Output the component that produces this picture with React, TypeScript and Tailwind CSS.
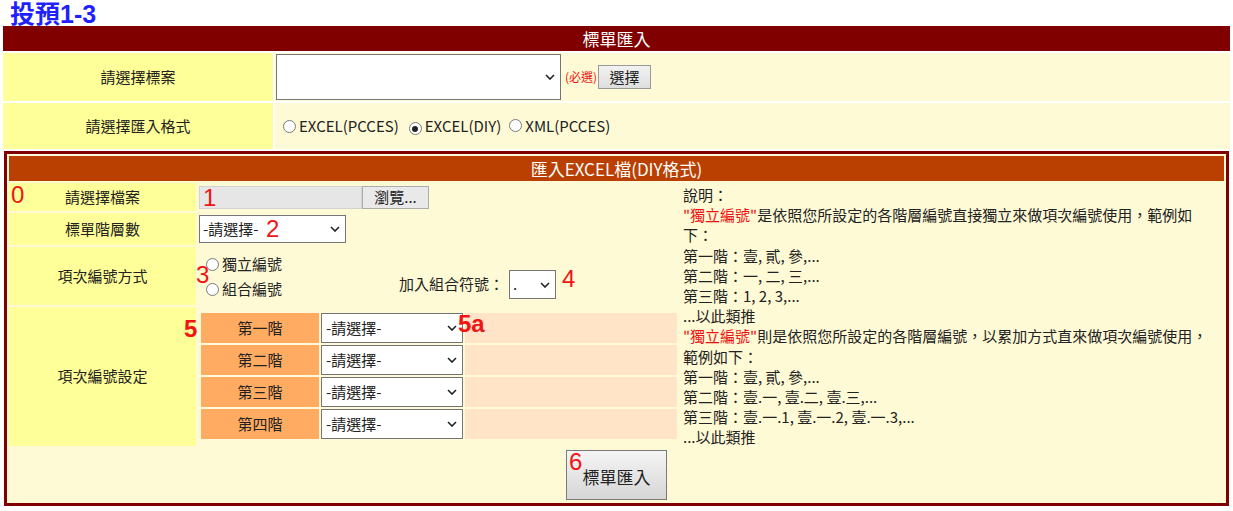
import React from "react";

const Chevron = () => (
  <svg width="10" height="6" viewBox="0 0 10 6" className="shrink-0">
    <polyline points="1,1 5,5 9,1" fill="none" stroke="#222" strokeWidth="1.6" />
  </svg>
);

const Radio = ({ checked }: { checked?: boolean }) => (
  <span className="inline-flex w-[13px] h-[13px] rounded-full border border-[#7a7a7a] bg-white items-center justify-center shrink-0">
    {checked && <span className="w-[6px] h-[6px] rounded-full bg-[#222]" />}
  </span>
);

const FakeSelect = ({ className, text }: { className: string; text?: string }) => (
  <div className={"flex items-center justify-between bg-white border border-[#767676] pr-[5px] " + className}>
    <span className="whitespace-nowrap">{text ?? ""}</span>
    <Chevron />
  </div>
);

const Red = ({ children }: { children: React.ReactNode }) => <span className="text-[#ee1111]">{children}</span>;

const Mark = ({ children, className }: { children: React.ReactNode; className: string }) => (
  <div className={"absolute text-[24px] leading-[24px] font-['Liberation_Sans',Arial,sans-serif] text-[#f01414] " + className}>
    {children}
  </div>
);

export default function App() {
  const levels = ["第一階", "第二階", "第三階", "第四階"];
  return (
    <div className="relative w-[1233px] h-[511px] bg-white font-['Noto_Sans_CJK_TC','Noto_Sans',sans-serif] text-[15px] text-[#222]">
      <div className="h-[26px] pl-[10px] text-[25px] leading-[28px] font-bold text-[#1f1fff] font-['Liberation_Sans','Noto_Sans_CJK_TC',sans-serif]">
        投預1-3
      </div>
      <div className="mx-[3px] flex flex-col gap-[2px]">
        <div className="h-[25px] bg-[#800000] text-white text-[17px] leading-[25px] text-center">標單匯入</div>
        <div className="flex gap-[2px] h-[48px]">
          <div className="w-[270px] bg-[#ffff99] flex items-center justify-center">請選擇標案</div>
          <div className="flex-1 bg-[#fffad6] flex items-center pl-[1px]">
            <FakeSelect className="w-[285px] h-[46px]" />
            <span className="text-[12px] text-[#ee1111] ml-[4px]">(必選)</span>
            <button className="ml-[1px] w-[53px] h-[24px] bg-linear-to-b from-[#f2f2f2] to-[#dedede] border border-[#9a9a9a] text-[15px] leading-[22px]">
              選擇
            </button>
          </div>
        </div>
        <div className="flex gap-[2px] h-[46px]">
          <div className="w-[270px] bg-[#ffff99] flex items-center justify-center">請選擇匯入格式</div>
          <div className="flex-1 bg-[#fffad6] flex items-center pl-[8px]">
            <Radio />
            <span className="ml-[3px]">EXCEL(PCCES)</span>
            <span className="ml-[10px]"><Radio checked /></span>
            <span className="ml-[3px]">EXCEL(DIY)</span>
            <span className="ml-[8px]"><Radio /></span>
            <span className="ml-[3px]">XML(PCCES)</span>
          </div>
        </div>
        <div className="mx-[1px] border-[3px] border-[#800000] p-[2px] bg-[#fffad6] flex flex-col gap-[2px]">
          <div className="h-[25px] bg-[#b94000] text-white text-[17px] leading-[25px] text-center">匯入EXCEL檔(DIY格式)</div>
          <div className="flex gap-[2px] h-[263px]">
            <div className="w-[671px] flex flex-col gap-[2px]">
              <div className="flex gap-[2px] h-[28px]">
                <div className="w-[187px] bg-[#ffff99] flex items-center justify-center">請選擇檔案</div>
                <div className="flex-1 flex items-center pl-[1px]">
                  <div className="w-[163px] h-[23px] bg-[#e6e6e6] border border-[#d2d2d2]" />
                  <div className="w-[67px] h-[23px] bg-[#e9e9e9] border border-[#adadad] flex items-center justify-center text-[15px]">
                    瀏覽...
                  </div>
                </div>
              </div>
              <div className="flex gap-[2px] h-[32px]">
                <div className="w-[187px] bg-[#ffff99] flex items-center justify-center">標單階層數</div>
                <div className="flex-1 flex items-center pl-[1px]">
                  <FakeSelect className="w-[147px] h-[28px] pl-[3px]" text="-請選擇-" />
                </div>
              </div>
              <div className="flex gap-[2px] h-[58px]">
                <div className="w-[187px] bg-[#ffff99] flex items-center justify-center">項次編號方式</div>
                <div className="flex-1 flex items-start">
                  <div className="w-[201px] pl-[8px] pt-[7px] flex flex-col gap-[5px]">
                    <div className="h-[20px] flex items-center">
                      <Radio />
                      <span className="ml-[3px]">獨立編號</span>
                    </div>
                    <div className="h-[20px] flex items-center">
                      <Radio />
                      <span className="ml-[3px]">組合編號</span>
                    </div>
                  </div>
                  <div className="mt-[23px] h-[29px] flex items-center">
                    <span>加入組合符號：</span>
                    <FakeSelect className="ml-[5px] w-[47px] h-[29px] pl-[3px]" text="." />
                  </div>
                </div>
              </div>
              <div className="flex gap-[2px] flex-1">
                <div className="w-[187px] bg-[#ffff99] flex items-center justify-center">項次編號設定</div>
                <div className="flex-1 px-[3px] pt-[6px] flex flex-col gap-[2px]">
                  {levels.map((l) => (
                    <div key={l} className="flex gap-[2px] h-[30px]">
                      <div className="w-[118px] bg-[#ffab62] flex items-center justify-center">{l}</div>
                      <FakeSelect className="w-[142px] h-[30px] pl-[4px]" text="-請選擇-" />
                      <div className="flex-1 bg-[#ffe4c8]" />
                    </div>
                  ))}
                </div>
              </div>
            </div>
            <div className="flex-1 pl-[1px] pt-[2px] leading-[20.2px] whitespace-nowrap">
              <div>說明：</div>
              <div><Red>"獨立編號"</Red>是依照您所設定的各階層編號直接獨立來做項次編號使用，範例如</div>
              <div>下：</div>
              <div>第一階：壹, 貳, 參,...</div>
              <div>第二階：一, 二, 三,...</div>
              <div>第三階：1, 2, 3,...</div>
              <div>...以此類推</div>
              <div><Red>"獨立編號"</Red>則是依照您所設定的各階層編號，以累加方式直來做項次編號使用，</div>
              <div>範例如下：</div>
              <div>第一階：壹, 貳, 參,...</div>
              <div>第二階：壹.一, 壹.二, 壹.三,...</div>
              <div>第三階：壹.一.1, 壹.一.2, 壹.一.3,...</div>
              <div>...以此類推</div>
            </div>
          </div>
          <div className="h-[53px] flex justify-center pt-[2px]">
            <button className="w-[101px] h-[50px] bg-linear-to-b from-[#f5f5f5] to-[#d6d6d6] border border-[#7a7a7a] text-[17px] pt-[4px]">
              標單匯入
            </button>
          </div>
        </div>
      </div>

      <Mark className="left-[11px] top-[183px]">0</Mark>
      <Mark className="left-[203px] top-[186px]">1</Mark>
      <Mark className="left-[266px] top-[217px]">2</Mark>
      <Mark className="left-[196px] top-[263px]">3</Mark>
      <Mark className="left-[562px] top-[267px]">4</Mark>
      <Mark className="left-[184px] top-[317px] font-bold">5</Mark>
      <Mark className="left-[458px] top-[312px] font-bold">5a</Mark>
      <Mark className="left-[569px] top-[450px]">6</Mark>
    </div>
  );
}
